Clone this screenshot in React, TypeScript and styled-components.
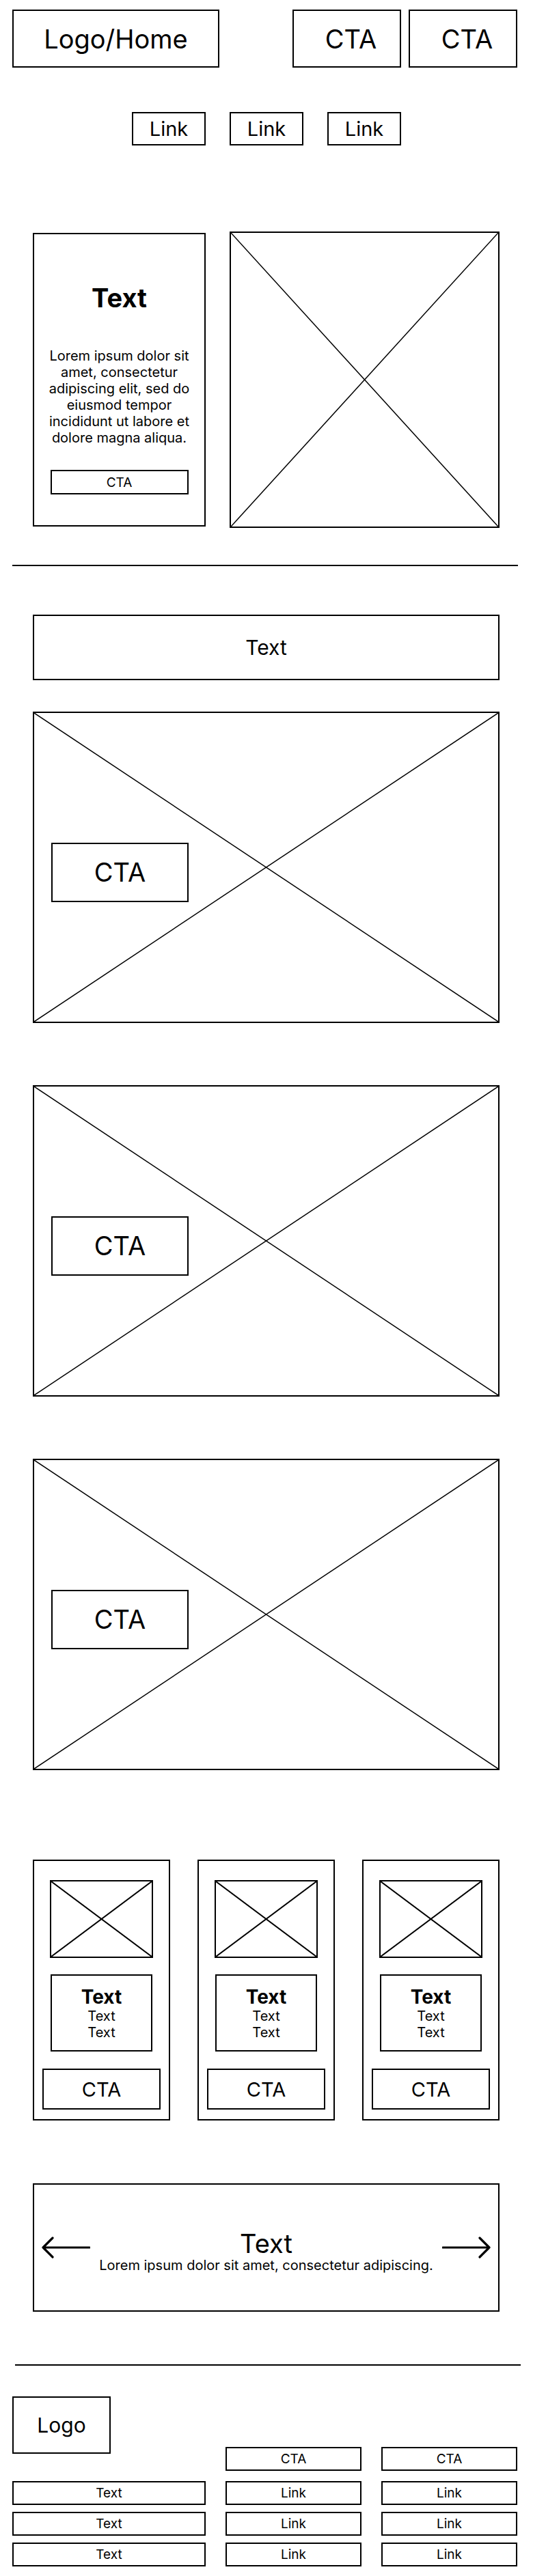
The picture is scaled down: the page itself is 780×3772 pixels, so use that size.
import React from "react";
import styled, { createGlobalStyle } from "styled-components";

const GlobalStyle = createGlobalStyle`
  * {
    box-sizing: border-box;
  }
  body {
    margin: 0;
    background: #fff;
    color: #000;
    font-family: Inter, "Liberation Sans", Arial, sans-serif;
  }
`;

const Page = styled.div`
  width: 780px;
  display: flex;
  flex-direction: column;
  padding-bottom: 10px;
`;

// generic outlined wireframe box with centred label
const Outlined = styled.div`
  border: 2px solid #000;
  background: #fff;
  display: flex;
  align-items: center;
  justify-content: center;
  text-align: center;
`;

const HeaderBar = styled.header`
  display: flex;
  justify-content: space-between;
  padding: 14px 23px 0 18px;
`;

const LogoHome = styled(Outlined)`
  width: 303px;
  height: 85px;
  font-size: 38px;
`;

const CtaGroup = styled.div`
  display: flex;
  gap: 11px;
`;

const HeaderCta = styled(Outlined)`
  width: 159px;
  height: 85px;
  font-size: 38px;
  padding-left: 12px;
`;

const NavRow = styled.nav`
  display: flex;
  justify-content: center;
  gap: 35px;
  margin-top: 65px;
`;

const NavLink = styled(Outlined)`
  width: 108px;
  height: 49px;
  font-size: 29px;
`;

const Intro = styled.section`
  display: flex;
  align-items: center;
  gap: 35px;
  margin-top: 126px;
  padding: 0 49px 0 48px;
`;

const IntroCard = styled.div`
  width: 253px;
  height: 430px;
  border: 2px solid #000;
  display: flex;
  flex-direction: column;
  align-items: center;
  padding-top: 70px;
`;

const IntroTitle = styled.h1`
  margin: 0;
  font-size: 38px;
  line-height: 46px;
  font-weight: 700;
`;

const IntroBody = styled.p`
  margin: 50px 0 0;
  width: 212px;
  font-size: 20px;
  line-height: 24px;
  text-align: center;
`;

const SmallCta = styled(Outlined)`
  margin-top: 35px;
  width: 202px;
  height: 36px;
  font-size: 19px;
`;

const Placeholder = styled.div<{ $w?: number; $h: number }>`
  position: relative;
  border: 2px solid #000;
  width: ${(p) => (p.$w ? `${p.$w}px` : "auto")};
  height: ${(p) => p.$h}px;
  flex-shrink: 0;
`;

const CrossSvg = styled.svg`
  position: absolute;
  inset: 0;
  width: 100%;
  height: 100%;
`;

const Cross = ({ weight = 1.5 }: { weight?: number }) => (
  <CrossSvg viewBox="0 0 100 100" preserveAspectRatio="none">
    <line x1="0" y1="0" x2="100" y2="100" stroke="#000" strokeWidth={weight} vectorEffect="non-scaling-stroke" />
    <line x1="100" y1="0" x2="0" y2="100" stroke="#000" strokeWidth={weight} vectorEffect="non-scaling-stroke" />
  </CrossSvg>
);

const Rule = styled.hr<{ $left: number; $right: number; $top: number }>`
  border: none;
  height: 2px;
  background: #000;
  margin: ${(p) => `${p.$top}px ${p.$right}px 0 ${p.$left}px`};
`;

const Banner = styled(Outlined)`
  margin: 71px 49px 0 48px;
  height: 96px;
  font-size: 30px;
`;

const Hero = styled(Placeholder)<{ $top: number }>`
  margin: ${(p) => p.$top}px 49px 0 48px;
  display: flex;
  align-items: center;
  padding-left: 25px;
`;

const HeroCta = styled(Outlined)`
  position: relative;
  margin-top: 14px;
  width: 201px;
  height: 87px;
  font-size: 38px;
`;

const CardGrid = styled.section`
  display: grid;
  grid-template-columns: repeat(3, 1fr);
  gap: 40px;
  margin-top: 131px;
  padding: 0 49px 0 48px;
`;

const Card = styled.div`
  height: 382px;
  border: 2px solid #000;
  display: flex;
  flex-direction: column;
  align-items: center;
  padding-top: 28px;
`;

const CardText = styled(Outlined)`
  flex-direction: column;
  margin-top: 24px;
  width: 149px;
  height: 113px;
`;

const CardTitle = styled.div`
  font-size: 28px;
  line-height: 32px;
  font-weight: 700;
`;

const CardLine = styled.div`
  font-size: 20px;
  line-height: 24px;
`;

const CardCta = styled(Outlined)`
  margin-top: 25px;
  width: 173px;
  height: 60px;
  font-size: 29px;
`;

const Carousel = styled(Outlined)`
  margin: 92px 49px 0 48px;
  height: 188px;
  justify-content: space-between;
  padding: 0 10px;
`;

const CarouselText = styled.div`
  display: flex;
  flex-direction: column;
  align-items: center;
  margin-top: 12px;
`;

const CarouselTitle = styled.div`
  font-size: 38px;
  line-height: 40px;
`;

const CarouselBody = styled.div`
  font-size: 20px;
  line-height: 24px;
`;

const Arrow = ({ dir }: { dir: "left" | "right" }) => (
  <svg width="72" height="32" viewBox="0 0 72 32" style={{ transform: dir === "right" ? "scaleX(-1)" : undefined }}>
    <path d="M3 16 H71 M17 2 L3 16 L17 30" fill="none" stroke="#000" strokeWidth="3.2" strokeLinecap="round" strokeLinejoin="round" />
  </svg>
);

const Footer = styled.footer`
  display: grid;
  grid-template-columns: 283px 199px 199px;
  justify-content: space-between;
  row-gap: 10px;
  margin-top: 45px;
  padding: 0 23px 0 18px;
`;

const FooterLogo = styled(Outlined)`
  width: 144px;
  height: 84px;
  font-size: 30px;
  margin-bottom: 30px;
`;

const FooterCell = styled(Outlined)<{ $lead?: boolean }>`
  height: 35px;
  font-size: 19px;
  align-self: end;
  margin-bottom: ${(p) => (p.$lead ? "5px" : "0")};
`;

const heroTops = [46, 91, 91];

export default function App() {
  return (
    <>
      <GlobalStyle />
      <Page>
        <HeaderBar>
          <LogoHome>Logo/Home</LogoHome>
          <CtaGroup>
            <HeaderCta>CTA</HeaderCta>
            <HeaderCta>CTA</HeaderCta>
          </CtaGroup>
        </HeaderBar>
        <NavRow>
          <NavLink>Link</NavLink>
          <NavLink>Link</NavLink>
          <NavLink>Link</NavLink>
        </NavRow>

        <Intro>
          <IntroCard>
            <IntroTitle>Text</IntroTitle>
            <IntroBody>
              Lorem ipsum dolor sit amet, consectetur adipiscing elit, sed do eiusmod tempor incididunt ut labore et
              dolore magna aliqua.
            </IntroBody>
            <SmallCta>CTA</SmallCta>
          </IntroCard>
          <Placeholder $w={395} $h={434}>
            <Cross />
          </Placeholder>
        </Intro>

        <Rule $top={54} $left={18} $right={22} />

        <Banner>Text</Banner>

        {heroTops.map((top, i) => (
          <Hero key={i} $h={456} $top={top}>
            <Cross />
            <HeroCta>CTA</HeroCta>
          </Hero>
        ))}

        <CardGrid>
          {[0, 1, 2].map((i) => (
            <Card key={i}>
              <Placeholder $w={151} $h={114}>
                <Cross weight={2} />
              </Placeholder>
              <CardText>
                <CardTitle>Text</CardTitle>
                <CardLine>Text</CardLine>
                <CardLine>Text</CardLine>
              </CardText>
              <CardCta>CTA</CardCta>
            </Card>
          ))}
        </CardGrid>

        <Carousel>
          <Arrow dir="left" />
          <CarouselText>
            <CarouselTitle>Text</CarouselTitle>
            <CarouselBody>Lorem ipsum dolor sit amet, consectetur adipiscing.</CarouselBody>
          </CarouselText>
          <Arrow dir="right" />
        </Carousel>

        <Rule $top={77} $left={22} $right={18} />

        <Footer>
          <FooterLogo>Logo</FooterLogo>
          <FooterCell $lead>CTA</FooterCell>
          <FooterCell $lead>CTA</FooterCell>
          {[0, 1, 2].map((i) => (
            <React.Fragment key={i}>
              <FooterCell>Text</FooterCell>
              <FooterCell>Link</FooterCell>
              <FooterCell>Link</FooterCell>
            </React.Fragment>
          ))}
        </Footer>
      </Page>
    </>
  );
}
